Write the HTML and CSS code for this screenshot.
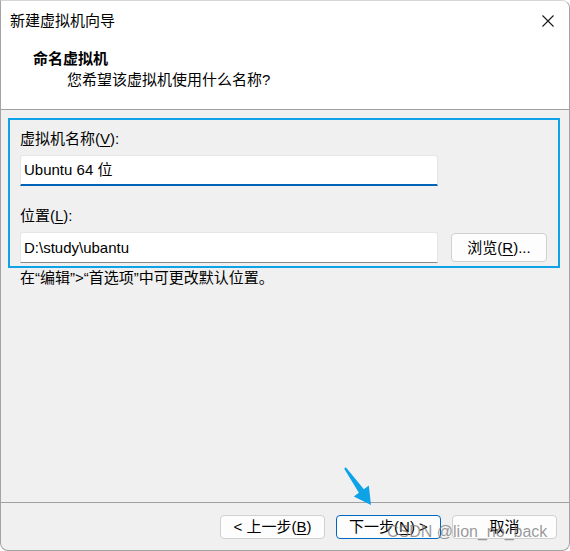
FILE: index.html
```html
<!DOCTYPE html>
<html lang="zh-CN">
<head>
<meta charset="utf-8">
<title>新建虚拟机向导</title>
<link rel="stylesheet" href="styles.css">
</head>
<body>
<div class="window">
  <div class="top">
    <div class="titlebar">
      <span class="title">新建虚拟机向导</span>
      <svg class="close" width="12" height="12" viewBox="0 0 12 12"><path d="M0.5 0.5 L11.5 11.5 M11.5 0.5 L0.5 11.5" stroke="#1a1a1a" stroke-width="1.1" fill="none"/></svg>
    </div>
    <div class="header">
      <div class="heading">命名虚拟机</div>
      <div class="subtitle">您希望该虚拟机使用什么名称?</div>
    </div>
  </div>
  <div class="main">
    <div class="group">
      <div class="label">虚拟机名称(<u>V</u>):</div>
      <div class="field focused">Ubuntu 64 位</div>
      <div class="label second">位置(<u>L</u>):</div>
      <div class="row">
        <div class="field">D:\study\ubantu</div>
        <div class="btn browse">浏览(<u>R</u>)...</div>
      </div>
    </div>
    <div class="hint">在“编辑”&gt;“首选项”中可更改默认位置。</div>
  </div>
  <div class="footer">
    <div class="btn nav">&lt; 上一步(<u>B</u>)</div>
    <div class="btn nav default">下一步(<u>N</u>) &gt;</div>
    <div class="btn nav">取消</div>
  </div>
  <svg class="arrow" width="570" height="551" viewBox="0 0 570 551">
    <polygon points="344.2,468.8 345.8,467.2 363.9,489.3 368.8,485.6 371,505 353.8,496.4 358.9,492.7" fill="#0ea2e6"/>
  </svg>
  <div class="watermark">CSDN @lion_no_back</div>
</div>
</body>
</html>
```

FILE: styles.css
```css
html, body {
  margin: 0;
  padding: 0;
  background: #ffffff;
}

body {
  font-family: "Liberation Sans", "Noto Sans CJK SC", sans-serif;
  font-size: 15px;
  color: #000;
}

u {
  text-decoration: underline;
  text-underline-offset: 2px;
  text-decoration-thickness: 1px;
}

.window {
  position: relative;
  width: 570px;
  height: 551px;
  box-sizing: border-box;
  border: 1px solid #a3a3a3;
  border-top-color: #d6d6d6;
  border-radius: 0 8px 8px 8px;
  background: #f0f0f0;
  display: flex;
  flex-direction: column;
  overflow: hidden;
}

.top {
  background: #ffffff;
  border-bottom: 1px solid #a0a0a0;
}

.titlebar {
  height: 39px;
  display: flex;
  align-items: center;
  justify-content: space-between;
  padding: 0 15px 0 9px;
}

.title {
  line-height: 20px;
}

.close {
  display: block;
}

.header {
  padding: 8px 0 19px 32px;
}

.heading {
  font-weight: bold;
  line-height: 21px;
}

.subtitle {
  line-height: 21px;
  padding-left: 34px;
}

.main {
  flex: 1;
  display: flex;
  flex-direction: column;
}

.group {
  margin: 8px 9px 0 7px;
  border: 2px solid #0ea2e6;
  padding: 9px 10px 3px 10px;
}

.label {
  line-height: 20px;
}

.label.second {
  margin-top: 20px;
}

.field {
  box-sizing: border-box;
  width: 418px;
  height: 31px;
  margin-top: 6px;
  background: #ffffff;
  border: 1px solid #e6e6e6;
  border-bottom: 1px solid #8a8a8a;
  border-radius: 3px 3px 0 0;
  padding: 0 3px;
  display: flex;
  align-items: center;
  line-height: 20px;
  white-space: nowrap;
}

.field.focused {
  border-bottom: 2px solid #0063b8;
}

.row {
  display: flex;
  align-items: center;
  gap: 13px;
  margin-top: 6px;
}

.row .field {
  margin-top: 0;
}

.btn {
  box-sizing: border-box;
  display: flex;
  align-items: center;
  justify-content: center;
  background: #fdfdfd;
  border: 1px solid #d0d0d0;
  border-radius: 4px;
  line-height: 20px;
  white-space: nowrap;
}

.browse {
  width: 96px;
  height: 29px;
}

.hint {
  padding-left: 19px;
  line-height: 20px;
}

.footer {
  border-top: 1px solid #a0a0a0;
  box-sizing: border-box;
  height: 48px;
  display: flex;
  justify-content: flex-end;
  align-items: flex-start;
  gap: 11px;
  padding: 12px 12px 0 0;
}

.nav {
  width: 105px;
  height: 24px;
}

.nav.default {
  border-color: #0067c0;
}

.arrow {
  position: absolute;
  left: -1px;
  top: -1px;
  pointer-events: none;
}

.watermark {
  position: absolute;
  left: 386px;
  top: 522px;
  font-family: "Liberation Sans", sans-serif;
  font-size: 16px;
  line-height: 18px;
  color: rgba(120, 120, 120, 0.75);
  pointer-events: none;
}
```
